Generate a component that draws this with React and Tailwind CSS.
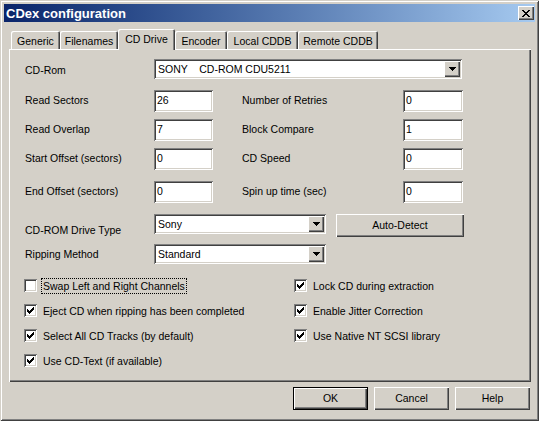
import React from 'react';

const raised = "shadow-[inset_1px_1px_0_#fff,inset_-1px_-1px_0_#404040,inset_-2px_-2px_0_#808080]";
const sunken = "shadow-[inset_1px_1px_0_#808080,inset_-1px_-1px_0_#fff,inset_2px_2px_0_#404040,inset_-2px_-2px_0_#d4d0c8]";

const tabs = [
  { label: 'Generic', w: 'w-[49px]' },
  { label: 'Filenames', w: 'w-[58px]' },
  { label: 'CD Drive', w: 'w-[57px]', active: true },
  { label: 'Encoder', w: 'w-[52px]' },
  { label: 'Local CDDB', w: 'w-[71px]' },
  { label: 'Remote CDDB', w: 'w-[80px]' },
];

const rows = [
  { mt: 'mt-[11px]', a: 'Read Sectors', av: '26', b: 'Number of Retries', bv: '0' },
  { mt: 'mt-[7px]', a: 'Read Overlap', av: '7', b: 'Block Compare', bv: '1' },
  { mt: 'mt-[7px]', a: 'Start Offset (sectors)', av: '0', b: 'CD Speed', bv: '0' },
  { mt: 'mt-[11px]', a: 'End Offset (sectors)', av: '0', b: 'Spin up time (sec)', bv: '0' },
];

function Arrow() {
  return (
    <svg width="7" height="4" viewBox="0 0 7 4" shapeRendering="crispEdges">
      <path d="M0 0h7v1H0z M1 1h5v1H1z M2 2h3v1H2z M3 3h1v1H3z" fill="#000" />
    </svg>
  );
}

function Select({ w, value }) {
  return (
    <div className={`${w} h-[20px] bg-white ${sunken} flex items-center`}>
      <span className="flex-1 pl-[4px] whitespace-pre leading-none">{value}</span>
      <div className={`w-[16px] h-[16px] mr-[2px] bg-[#d4d0c8] ${raised} flex items-center justify-center`}>
        <Arrow />
      </div>
    </div>
  );
}

function Field({ w, value }) {
  return (
    <div className={`${w} h-[22px] bg-white ${sunken} flex items-center pl-[3px]`}>
      {value}
    </div>
  );
}

function Check({ label, checked, focused }) {
  return (
    <div className="h-[13px] flex items-center">
      <div className={`w-[13px] h-[13px] shrink-0 bg-white ${sunken}`}>
        {checked && (
          <svg width="13" height="13" viewBox="0 0 13 13" shapeRendering="crispEdges">
            <path d="M3 5h1v3H3z M4 6h1v3H4z M5 7h1v3H5z M6 6h1v3H6z M7 5h1v3H7z M8 4h1v3H8z M9 3h1v3H9z" fill="#000" />
          </svg>
        )}
      </div>
      <span className={`ml-[4px] px-[1px] leading-[14px] whitespace-nowrap border ${focused ? 'border-dotted border-black' : 'border-transparent'}`}>
        {label}
      </span>
    </div>
  );
}

function Button({ label, w, isDefault }) {
  const frame = isDefault
    ? "shadow-[inset_0_0_0_1px_#000,inset_2px_2px_0_#fff,inset_-2px_-2px_0_#404040,inset_-3px_-3px_0_#808080]"
    : raised;
  return (
    <div className={`${w} h-[23px] bg-[#d4d0c8] ${frame} flex items-center justify-center`}>
      {label}
    </div>
  );
}

export default function App() {
  return (
    <div
      className="w-[539px] h-[421px] bg-[#d4d0c8] p-[4px] flex flex-col text-black text-[10.5px] shadow-[inset_1px_1px_0_#d4d0c8,inset_-1px_-1px_0_#404040,inset_2px_2px_0_#fff,inset_-2px_-2px_0_#808080]"
      style={{ fontFamily: '"Liberation Sans", Arial, sans-serif' }}
    >
      {/* title bar */}
      <div className="h-[18px] bg-linear-to-r from-[#0a246a] to-[#a6caf0] flex items-center">
        <span className="flex-1 pl-[2px] text-white font-bold text-[13px] leading-none">CDex configuration</span>
        <div className={`w-[16px] h-[14px] mr-[1px] bg-[#d4d0c8] ${raised} flex items-center justify-center`}>
          <svg width="8" height="7" viewBox="0 0 8 7" shapeRendering="crispEdges">
            <path d="M0 0h2v1H0z M6 0h2v1H6z M1 1h2v1H1z M5 1h2v1H5z M2 2h4v1H2z M3 3h2v1H3z M2 4h4v1H2z M1 5h2v1H1z M5 5h2v1H5z M0 6h2v1H0z M6 6h2v1H6z" fill="#000" />
          </svg>
        </div>
      </div>

      {/* tabs */}
      <div className="mt-[7px] ml-[7px] h-[20px] flex items-end">
        {tabs.map((t) =>
          t.active ? (
            <div
              key={t.label}
              className={`${t.w} h-[21px] -mb-px relative z-10 bg-[#d4d0c8] rounded-t-[2px] shadow-[inset_1px_1px_0_#fff,inset_-1px_0_0_#404040,inset_-2px_0_0_#808080] flex justify-center pt-[3px]`}
            >
              {t.label}
            </div>
          ) : (
            <div
              key={t.label}
              className={`${t.w} h-[18px] rounded-t-[2px] shadow-[inset_1px_1px_0_#fff,inset_-1px_0_0_#404040,inset_-2px_0_0_#808080] flex justify-center pt-[3px]`}
            >
              {t.label}
            </div>
          )
        )}
      </div>

      {/* tab page */}
      <div className={`ml-[5px] w-[522px] h-[333px] ${raised} pt-[10px] pl-[16px] flex flex-col`}>
        <div className="flex items-center h-[20px]">
          <span className="w-[129px] mt-[3px]">CD-Rom</span>
          <Select w="w-[308px]" value="SONY    CD-ROM CDU5211" />
        </div>

        {rows.map((r) => (
          <div key={r.a} className={`${r.mt} flex items-center h-[22px]`}>
            <span className="w-[129px]">{r.a}</span>
            <Field w="w-[59px]" value={r.av} />
            <span className="w-[190px] pl-[29px]">{r.b}</span>
            <Field w="w-[60px]" value={r.bv} />
          </div>
        ))}

        <div className="mt-[11px] flex items-start h-[23px]">
          <span className="w-[129px] mt-[9px]">CD-ROM Drive Type</span>
          <Select w="w-[172px]" value="Sony" />
          <div className="ml-[10px]">
            <Button label="Auto-Detect" w="w-[128px]" />
          </div>
        </div>

        <div className="mt-[7px] flex items-center h-[20px]">
          <span className="w-[129px] mt-[1px]">Ripping Method</span>
          <Select w="w-[172px]" value="Standard" />
        </div>

        <div className="mt-[15px] -ml-px flex">
          <div className="w-[270px] flex flex-col gap-[12px]">
            <Check label="Swap Left and Right Channels" focused />
            <Check label="Eject CD when ripping has been completed" checked />
            <Check label="Select All CD Tracks (by default)" checked />
            <Check label="Use CD-Text (if available)" checked />
          </div>
          <div className="flex flex-col gap-[12px]">
            <Check label="Lock CD during extraction" checked />
            <Check label="Enable Jitter Correction" checked />
            <Check label="Use Native NT SCSI library" checked />
          </div>
        </div>
      </div>

      {/* buttons */}
      <div className="mt-[5px] mr-[5px] flex justify-end gap-[6px]">
        <Button label="OK" w="w-[75px]" isDefault />
        <Button label="Cancel" w="w-[75px]" />
        <Button label="Help" w="w-[75px]" />
      </div>
    </div>
  );
}
